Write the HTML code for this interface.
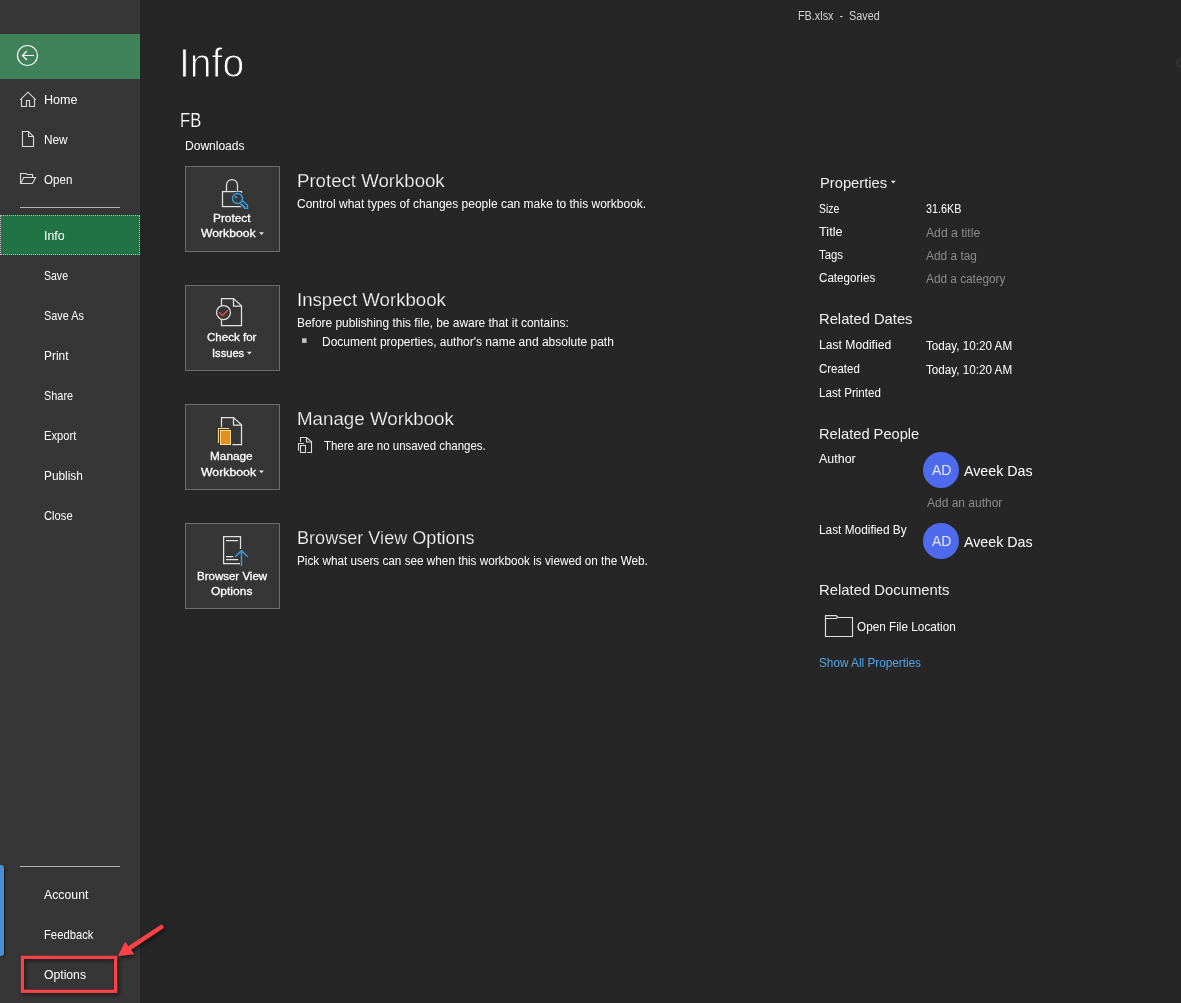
<!DOCTYPE html>
<html lang="en">
<head>
<meta charset="utf-8">
<title>FB.xlsx - Saved</title>
<style>
html,body{margin:0;padding:0;}
body{width:1181px;height:1003px;overflow:hidden;background:#262626;position:relative;font-family:"Liberation Sans",sans-serif;color:#fff;}
.t{position:absolute;white-space:nowrap;line-height:normal;transform-origin:0 0;font-family:"Liberation Sans",sans-serif;}
.abs{position:absolute;}
#sidebar{position:absolute;left:0;top:0;width:140px;height:1003px;background:#363636;}
#back{position:absolute;left:0;top:34px;width:140px;height:45px;background:#3f8159;}
.sep{position:absolute;left:20px;width:100px;height:1px;background:#b4b4b4;}
#sel{position:absolute;left:0;top:215px;width:140px;height:40px;background:#217346;box-sizing:border-box;border:1px dotted #e6a0cf;}
#bluebar{position:absolute;left:0;top:865px;width:4.4px;height:91px;background:#4a8fd1;border-radius:0 3px 3px 0;box-shadow:1px 1px 2.5px rgba(0,0,0,.55);}
.btn{position:absolute;left:185px;width:95px;height:86px;box-sizing:border-box;background:#363636;border:1px solid #6b6b6b;}
.av{position:absolute;width:36px;height:36px;border-radius:50%;background:#4f6bed;}
svg{position:absolute;overflow:visible;}
</style>
</head>
<body>
<div id="sidebar">
  <div id="back"></div>
  <div class="sep" style="top:207px"></div>
  <div id="sel"></div>
  <div class="sep" style="top:866px"></div>
  <div id="bluebar"></div>
</div>
<div class="btn" style="top:166px"></div>
<div class="btn" style="top:285px"></div>
<div class="btn" style="top:404px"></div>
<div class="btn" style="top:523px"></div>
<div class="av" style="left:923px;top:452px"></div>
<div class="av" style="left:923px;top:523px"></div>
<svg width="1181" height="1003" viewBox="0 0 1181 1003" style="left:0;top:0" fill="none" stroke-linecap="butt" stroke-linejoin="miter">
  <!-- back button -->
  <g stroke="#ffffff" stroke-width="1.2">
    <circle cx="27.45" cy="55.5" r="10"/>
    <path d="M34.1 55.5H22.4M26.9 51L22.4 55.5L26.9 60"/>
  </g>
  <!-- home / new / open -->
  <g stroke="#dadada" stroke-width="1.1">
    <path d="M21.5 99V106.5H26.5V100.5H29.5V106.5H34.5V99"/>
    <path d="M20.2 99.8L28 92.2L35.8 99.8"/>
    <path d="M22.5 131.5H28.5L33.5 136.5V146.5H22.5Z"/>
    <path d="M28.5 131.5V136.5H33.5"/>
    <path d="M20.5 183.5V173.5H26L27.2 174.5H32.5V177.5"/>
    <path d="M20.8 183.5L23.7 177.5H35.6L32.4 183.5Z"/>
  </g>
  <!-- protect workbook: lock + key -->
  <g stroke="#e2e2e2" stroke-width="1.25">
    <rect x="222.5" y="191.6" width="19" height="15"/>
    <path d="M226.5 191.5V185A5.5 5.5 0 0 1 237.5 185V191.5"/>
  </g>
  <g stroke="#363636" stroke-width="4">
    <circle cx="237.5" cy="198.5" r="5"/>
    <path d="M242.3 200.4L247.5 205.3V208.3H244.7L240.8 203.3Z" fill="#363636"/>
  </g>
  <g stroke="#3a9de3" stroke-width="1.35">
    <circle cx="237.5" cy="198.5" r="5"/>
    <path d="M242.3 200.4L247.5 205.3V208.3H244.7V207H243.4V205.7H242.1V204.4H240.8V203.3"/>
  </g>
  <rect x="235" y="196.2" width="2" height="2" fill="#3a9de3"/>
  <!-- check for issues -->
  <g stroke="#e2e2e2" stroke-width="1.25">
    <path d="M221.5 298.6H233.5L241.5 305.8V325.5H221.5Z"/>
    <path d="M233.5 298.6V306.2H241.5"/>
    <circle cx="223.5" cy="312.5" r="7" fill="#363636"/>
  </g>
  <path d="M219.2 312.3L222.5 315.5L228 310.3" stroke="#e8474c" stroke-width="1.35"/>
  <!-- manage workbook -->
  <g stroke="#e2e2e2" stroke-width="1.25">
    <path d="M221.5 427.2V417.6H233.5L241.5 424.8V444.5H232.3"/>
    <path d="M233.5 417.6V425.2H241.5"/>
  </g>
  <path d="M218.5 443V428.5H229.2" stroke="#fbd784" stroke-width="1.1"/>
  <rect x="220.5" y="430.5" width="10" height="14" fill="#e39024" stroke="#fcd988" stroke-width="1"/>
  <!-- browser view options -->
  <g stroke="#e2e2e2" stroke-width="1.25">
    <path d="M240.5 549V536.6H223.6V563.5H240"/>
    <path d="M226 540.5H238.1M226 556.5H233.3M226 559.5H238.1"/>
  </g>
  <path d="M241.5 566V551M235.2 556.8L241.5 550.8L247.8 556.8" stroke="#3a9de3" stroke-width="1.4"/>
  <!-- small versions icon -->
  <g stroke="#dcdcdc" stroke-width="1.1">
    <path d="M300.5 442V437.5H306.5L311.5 441.8V452.5H307.2"/>
    <path d="M306.5 437.5V442H311.5"/>
    <path d="M298.5 450.8V443.5H303.9"/>
    <rect x="300.5" y="445.5" width="5" height="7"/>
  </g>
  <!-- folder -->
  <g stroke="#dedede" stroke-width="1.15">
    <path d="M825.5 615.6H836.2L838 617.5H852.5V636.5H825.5Z"/>
    <path d="M825.5 618.5H836.2L837.6 617.5"/>
  </g>
  <!-- dropdown carets + bullet -->
  <g fill="#e6e6e6" stroke="none">
    <path d="M259 232.2H264L261.5 234.9Z"/>
    <path d="M246.8 351.7H251.8L249.3 354.4Z"/>
    <path d="M258.9 470.6H263.9L261.4 473.3Z"/>
    <path d="M890.8 180.8H895.8L893.3 183.5Z"/>
    <rect x="302" y="338.3" width="4.6" height="4.6" fill="#c4c4c4"/>
  </g>
  <circle cx="1180.5" cy="63" r="3.5" stroke="#323232" stroke-width="2.6"/>
</svg>

<header aria-label="Title bar">
<span class="t" style="left:798.16px;top:9.00px;font-size:12.0px;color:#d4d4d4;transform:scaleX(0.9014);white-space:pre">FB.xlsx  -  Saved</span>
</header>
<nav aria-label="Backstage navigation">
<span class="t" style="left:43.64px;top:93.00px;font-size:12.6px;color:#ffffff;transform:scaleX(0.9992);">Home</span>
<span class="t" style="left:43.67px;top:133.00px;font-size:12.6px;color:#ffffff;transform:scaleX(0.9388);">New</span>
<span class="t" style="left:43.54px;top:173.00px;font-size:12.6px;color:#ffffff;transform:scaleX(0.9192);">Open</span>
<span class="t" style="left:43.77px;top:229.00px;font-size:12.6px;color:#ffffff;transform:scaleX(0.9850);">Info</span>
<span class="t" style="left:44.08px;top:269.00px;font-size:12.6px;color:#ffffff;transform:scaleX(0.8356);">Save</span>
<span class="t" style="left:43.58px;top:309.00px;font-size:12.6px;color:#ffffff;transform:scaleX(0.8620);">Save As</span>
<span class="t" style="left:43.80px;top:349.00px;font-size:12.6px;color:#ffffff;transform:scaleX(0.9480);">Print</span>
<span class="t" style="left:44.35px;top:389.00px;font-size:12.6px;color:#ffffff;transform:scaleX(0.8675);">Share</span>
<span class="t" style="left:43.77px;top:429.00px;font-size:12.6px;color:#ffffff;transform:scaleX(0.8856);">Export</span>
<span class="t" style="left:43.55px;top:469.00px;font-size:12.6px;color:#ffffff;transform:scaleX(0.9417);">Publish</span>
<span class="t" style="left:44.02px;top:509.00px;font-size:12.6px;color:#ffffff;transform:scaleX(0.8900);">Close</span>
<span class="t" style="left:44.24px;top:888.00px;font-size:12.6px;color:#ffffff;transform:scaleX(0.9776);">Account</span>
<span class="t" style="left:43.76px;top:928.00px;font-size:12.6px;color:#ffffff;transform:scaleX(0.8932);">Feedback</span>
<span class="t" style="left:43.98px;top:968.00px;font-size:12.6px;color:#ffffff;transform:scaleX(0.9669);">Options</span>
</nav>
<main aria-label="Info">
<span class="t" style="left:179.41px;top:40.00px;font-size:40.4px;color:#ffffff;transform:scaleX(0.9665);-webkit-text-stroke:1px #262626">Info</span>
<span class="t" style="left:180.48px;top:109.00px;font-size:20.0px;color:#ffffff;transform:scaleX(0.8315);-webkit-text-stroke:0.2px #262626">FB</span>
<span class="t" style="left:184.95px;top:139.00px;font-size:12.0px;color:#ffffff;transform:scaleX(1.0026);">Downloads</span>
<span class="t" style="left:212.89px;top:211.00px;font-size:11.7px;color:#ffffff;transform:scaleX(1.0118);-webkit-text-stroke:0.3px #fff">Protect</span>
<span class="t" style="left:200.60px;top:226.00px;font-size:11.7px;color:#ffffff;transform:scaleX(1.0396);-webkit-text-stroke:0.3px #fff">Workbook</span>
<span class="t" style="left:207.15px;top:330.00px;font-size:11.7px;color:#ffffff;transform:scaleX(0.9890);-webkit-text-stroke:0.3px #fff">Check for</span>
<span class="t" style="left:211.78px;top:346.00px;font-size:11.7px;color:#ffffff;transform:scaleX(0.9515);-webkit-text-stroke:0.3px #fff">Issues</span>
<span class="t" style="left:210.22px;top:449.00px;font-size:11.7px;color:#ffffff;transform:scaleX(1.0101);-webkit-text-stroke:0.3px #fff">Manage</span>
<span class="t" style="left:200.88px;top:465.00px;font-size:11.7px;color:#ffffff;transform:scaleX(1.0501);-webkit-text-stroke:0.3px #fff">Workbook</span>
<span class="t" style="left:196.85px;top:569.00px;font-size:11.7px;color:#ffffff;transform:scaleX(0.9844);-webkit-text-stroke:0.3px #fff">Browser View</span>
<span class="t" style="left:210.71px;top:584.00px;font-size:11.7px;color:#ffffff;transform:scaleX(1.0285);-webkit-text-stroke:0.3px #fff">Options</span>
<span class="t" style="left:297.12px;top:170.00px;font-size:18.3px;color:#ffffff;transform:scaleX(1.0188);-webkit-text-stroke:0.25px #262626">Protect Workbook</span>
<span class="t" style="left:297.44px;top:289.00px;font-size:18.3px;color:#ffffff;transform:scaleX(1.0200);-webkit-text-stroke:0.25px #262626">Inspect Workbook</span>
<span class="t" style="left:296.76px;top:408.00px;font-size:18.3px;color:#ffffff;transform:scaleX(1.0246);-webkit-text-stroke:0.25px #262626">Manage Workbook</span>
<span class="t" style="left:296.81px;top:527.00px;font-size:18.3px;color:#ffffff;transform:scaleX(0.9895);-webkit-text-stroke:0.25px #262626">Browser View Options</span>
<span class="t" style="left:296.94px;top:197.00px;font-size:12.0px;color:#ffffff;transform:scaleX(0.9989);">Control what types of changes people can make to this workbook.</span>
<span class="t" style="left:296.76px;top:316.00px;font-size:12.0px;color:#ffffff;transform:scaleX(0.9936);">Before publishing this file, be aware that it contains:</span>
<span class="t" style="left:321.65px;top:335.00px;font-size:12.0px;color:#ffffff;transform:scaleX(0.9978);">Document properties, author&#x27;s name and absolute path</span>
<span class="t" style="left:323.65px;top:439.00px;font-size:12.0px;color:#ffffff;transform:scaleX(0.9547);">There are no unsaved changes.</span>
<span class="t" style="left:296.77px;top:554.00px;font-size:12.0px;color:#ffffff;transform:scaleX(0.9783);">Pick what users can see when this workbook is viewed on the Web.</span>
</main>
<aside aria-label="Properties">
<span class="t" style="left:819.86px;top:175.00px;font-size:14.8px;color:#f0f0f0;transform:scaleX(0.9947);">Properties</span>
<span class="t" style="left:818.50px;top:202.00px;font-size:12.0px;color:#ffffff;transform:scaleX(0.8676);">Size</span>
<span class="t" style="left:926.12px;top:202.00px;font-size:12.0px;color:#ffffff;transform:scaleX(0.8989);">31.6KB</span>
<span class="t" style="left:819.21px;top:225.00px;font-size:12.0px;color:#ffffff;transform:scaleX(1.0606);">Title</span>
<span class="t" style="left:926.45px;top:226.00px;font-size:12.0px;color:#8c8c8c;transform:scaleX(1.0147);">Add a title</span>
<span class="t" style="left:819.25px;top:248.00px;font-size:12.0px;color:#ffffff;transform:scaleX(0.9492);">Tags</span>
<span class="t" style="left:926.45px;top:249.00px;font-size:12.0px;color:#8c8c8c;transform:scaleX(0.9924);">Add a tag</span>
<span class="t" style="left:818.57px;top:271.00px;font-size:12.0px;color:#ffffff;transform:scaleX(0.9686);">Categories</span>
<span class="t" style="left:926.45px;top:272.00px;font-size:12.0px;color:#8c8c8c;transform:scaleX(0.9841);">Add a category</span>
<span class="t" style="left:818.73px;top:311.00px;font-size:14.8px;color:#f0f0f0;transform:scaleX(0.9971);">Related Dates</span>
<span class="t" style="left:818.64px;top:338.00px;font-size:12.0px;color:#ffffff;transform:scaleX(1.0107);">Last Modified</span>
<span class="t" style="left:925.85px;top:339.00px;font-size:12.0px;color:#ffffff;transform:scaleX(0.9733);">Today, 10:20 AM</span>
<span class="t" style="left:818.63px;top:362.00px;font-size:12.0px;color:#ffffff;transform:scaleX(0.9557);">Created</span>
<span class="t" style="left:925.85px;top:363.00px;font-size:12.0px;color:#ffffff;transform:scaleX(0.9733);">Today, 10:20 AM</span>
<span class="t" style="left:818.50px;top:386.00px;font-size:12.0px;color:#ffffff;transform:scaleX(0.9672);">Last Printed</span>
<span class="t" style="left:818.74px;top:426.00px;font-size:14.8px;color:#f0f0f0;transform:scaleX(0.9910);">Related People</span>
<span class="t" style="left:818.64px;top:452.00px;font-size:12.0px;color:#ffffff;transform:scaleX(1.0384);">Author</span>
<span class="t" style="left:932.15px;top:462.00px;font-size:14.5px;color:#e3e7ff;transform:scaleX(0.9640);">AD</span>
<span class="t" style="left:963.85px;top:463.00px;font-size:14.5px;color:#ffffff;transform:scaleX(0.9824);">Aveek Das</span>
<span class="t" style="left:927.04px;top:496.00px;font-size:12.0px;color:#8c8c8c;transform:scaleX(0.9987);">Add an author</span>
<span class="t" style="left:819.29px;top:523.00px;font-size:12.0px;color:#ffffff;transform:scaleX(0.9881);">Last Modified By</span>
<span class="t" style="left:932.15px;top:533.00px;font-size:14.5px;color:#e3e7ff;transform:scaleX(0.9640);">AD</span>
<span class="t" style="left:963.85px;top:534.00px;font-size:14.5px;color:#ffffff;transform:scaleX(0.9824);">Aveek Das</span>
<span class="t" style="left:818.72px;top:582.00px;font-size:14.8px;color:#f0f0f0;transform:scaleX(1.0033);">Related Documents</span>
<span class="t" style="left:856.80px;top:620.00px;font-size:12.0px;color:#ffffff;transform:scaleX(0.9807);">Open File Location</span>
<span class="t" style="left:819.23px;top:656.00px;font-size:12.0px;color:#4ea6ea;transform:scaleX(0.9802);">Show All Properties</span>
</aside>
<svg width="1181" height="1003" viewBox="0 0 1181 1003" style="left:0;top:0" fill="none">
  <defs>
    <filter id="sh" x="-20%" y="-20%" width="150%" height="150%">
      <feDropShadow dx="1.6" dy="2" stdDeviation="2" flood-color="#000" flood-opacity="0.62"/>
    </filter>
  </defs>
  <g filter="url(#sh)">
    <rect x="22.45" y="957.35" width="93.1" height="34" stroke="#fa4246" stroke-width="3.1"/>
    <path d="M161.4 927L128.6 948.6" stroke="#fa4246" stroke-width="4.3" stroke-linecap="round"/>
    <path d="M117.9 955.9L125.1 941.8L134.2 954.2Z" fill="#fa4246"/>
  </g>
</svg>

</body>
</html>
